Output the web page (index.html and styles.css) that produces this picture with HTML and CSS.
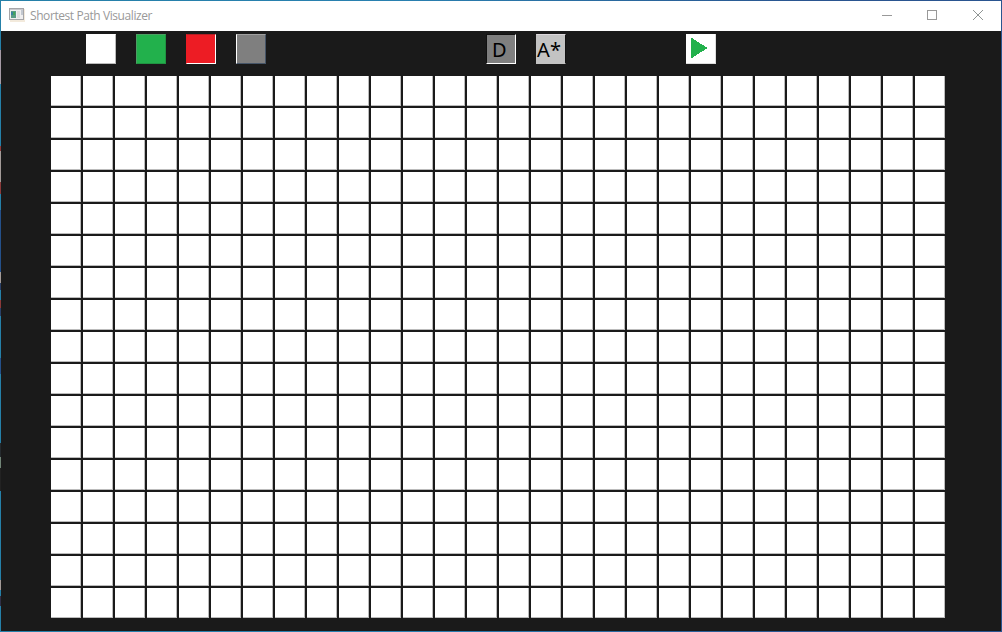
FILE: index.html
```html
<!DOCTYPE html>
<html lang="en">
<head>
<meta charset="utf-8">
<title>Shortest Path Visualizer</title>
<link rel="stylesheet" href="styles.css">
</head>
<body>
<div class="window">
  <header class="titlebar">
    <svg class="app-icon" width="16" height="16" viewBox="0 0 16 16" shape-rendering="crispEdges">
      <rect x="1" y="2" width="15" height="13" fill="#f3eadc"/>
      <rect x="0" y="1" width="15" height="12" fill="#a5a5a8"/>
      <rect x="1" y="2" width="13" height="1" fill="#c9c9cd"/>
      <rect x="1" y="3" width="13" height="9" fill="#f0eff0"/>
      <rect x="2" y="4" width="5" height="7" fill="#5a9c84"/>
      <rect x="2" y="5" width="3" height="3" fill="#3a80a0"/>
      <rect x="4" y="5" width="2" height="3" fill="#43a45b"/>
      <rect x="8" y="4" width="3" height="7" fill="#e0dedf"/>
      <rect x="12" y="3" width="2" height="5" fill="#c3c8d0"/>
    </svg>
    <h1 class="title">Shortest Path Visualizer</h1>
    <div class="controls">
      <svg width="46" height="29" viewBox="0 0 46 29" shape-rendering="crispEdges"><path d="M18 14.500h10" stroke="#999" fill="none"/></svg>
      <svg width="46" height="29" viewBox="0 0 46 29" shape-rendering="crispEdges"><rect x="17.500" y="9.500" width="9" height="9" stroke="#999" fill="none"/></svg>
      <svg width="46" height="29" viewBox="0 0 46 29"><path d="M17 9l10 10M27 9l-10 10" stroke="#8f9594" fill="none"/></svg>
    </div>
  </header>
  <nav class="toolbar">
    <div class="group">
      <button class="tool empty" aria-label="Empty"></button>
      <button class="tool start" aria-label="Start"></button>
      <button class="tool end" aria-label="End"></button>
      <button class="tool wall" aria-label="Wall"></button>
    </div>
    <div class="group">
      <button class="tool dijkstra">D</button>
      <button class="tool astar">A*</button>
    </div>
    <div class="group">
      <button class="tool run" aria-label="Run">
        <svg width="30" height="30" viewBox="0 0 30 30" shape-rendering="crispEdges"><path d="M5 3.500L21.500 14L5 24.500Z" fill="#22b14c"/></svg>
      </button>
    </div>
  </nav>
  <main class="grid" id="grid"></main>
</div>
<script src="grid.js"></script>
</body>
</html>
```

FILE: styles.css
```css
* { box-sizing: border-box; }

body {
  margin: 0;
  background: #1a1a1a;
  overflow: hidden;
}

.window {
  width: 1002px;
  height: 632px;
  padding: 1px;
  background:
    linear-gradient(#1a1a1a, #1a1a1a) 1px 1px / 1000px 630px no-repeat,
    linear-gradient(#2580a8 0 50px, #a69ba5 50px 84px, #2580a8 84px 146px, #8b3a3a 146px 151px, #a39b98 151px 182px, #8b3a3a 182px 194px, #2580a8 194px 210px, #24508a 210px 272px, #a39b98 272px 283px, #2a4067 283px 290px, #2580a8 290px 300px, #8b3a3a 300px 308px, #2a4067 308px 316px, #2580a8 316px 358px, #24508a 358px 374px, #2580a8 374px 443px, #252a2e 443px 457px, #718577 457px 468px, #222 468px 491px, #2580a8 491px 580px, #a39b98 580px 590px, #2580a8 590px 596px, #302f46 596px 606px, #2580a8 606px) 0 0 / 1px 100% no-repeat,
    linear-gradient(90deg, #2580a8, #2980b0 40%, #2a5590 80%, #2a5590);
}

.titlebar {
  display: flex;
  height: 30px;
  padding-left: 8px;
  background: #fff;
}

.app-icon {
  margin-top: 6px;
}

.title {
  margin: 0 auto 0 5px;
  font: 400 12px/30px "Open Sans", sans-serif;
  letter-spacing: -0.42px;
  color: #999;
}

.controls {
  display: flex;
  margin-right: -1px;
}

.toolbar {
  display: flex;
  gap: 220px;
  height: 45px;
  padding: 3px 0 0 85px;
}

.group {
  display: flex;
  gap: 20px;
}

.group:last-child {
  margin-left: -100px;
}

.tool {
  width: 30px;
  height: 30px;
  padding: 0;
  border: 1px solid;
  font: 400 20px/28px "Noto Sans", sans-serif;
  text-align: left;
  color: #000;
}

.empty { background: #fff; border-color: #fff #bbb #bbb #fff; }
.start { background: #22b14c; border-color: #4c9f63 #209442 #209442 #4c9f63; }
.end { background: #ed1c24; border-color: #b41d22 #fff #fff #ed1c24; }
.wall { background: #7f7f7f; border-color: #a0a0a0 #465568 #465568 #fff; }
.dijkstra { background: #7f7f7f; border-color: #111 #fff #fff #111; padding: 1px 0 0 5px; }
.astar { background: #c3c3c3; border-color: #ddd8dd #111 #c3c3c3 #c3c3c3; padding-top: 1px; letter-spacing: 0.3px; }
.run { background: #fff; border: 0; border-right: 1px solid #ddd; border-bottom: 1px solid #ddd; }
.run svg { display: block; }

.grid {
  display: grid;
  grid-template-columns: repeat(28, 30px);
  grid-auto-rows: 30px;
  gap: 2px;
  padding-left: 50px;
}

.cell {
  background: #fff;
  border: solid #bbb;
  border-width: 0 1px 1px 0;
}
```

FILE: grid.js
```js
const COLUMNS = 28;
const ROWS = 17;
const grid = document.getElementById('grid');

for (let i = 0; i < COLUMNS * ROWS; i++) {
  const cell = document.createElement('div');
  cell.className = 'cell';
  grid.appendChild(cell);
}
```
